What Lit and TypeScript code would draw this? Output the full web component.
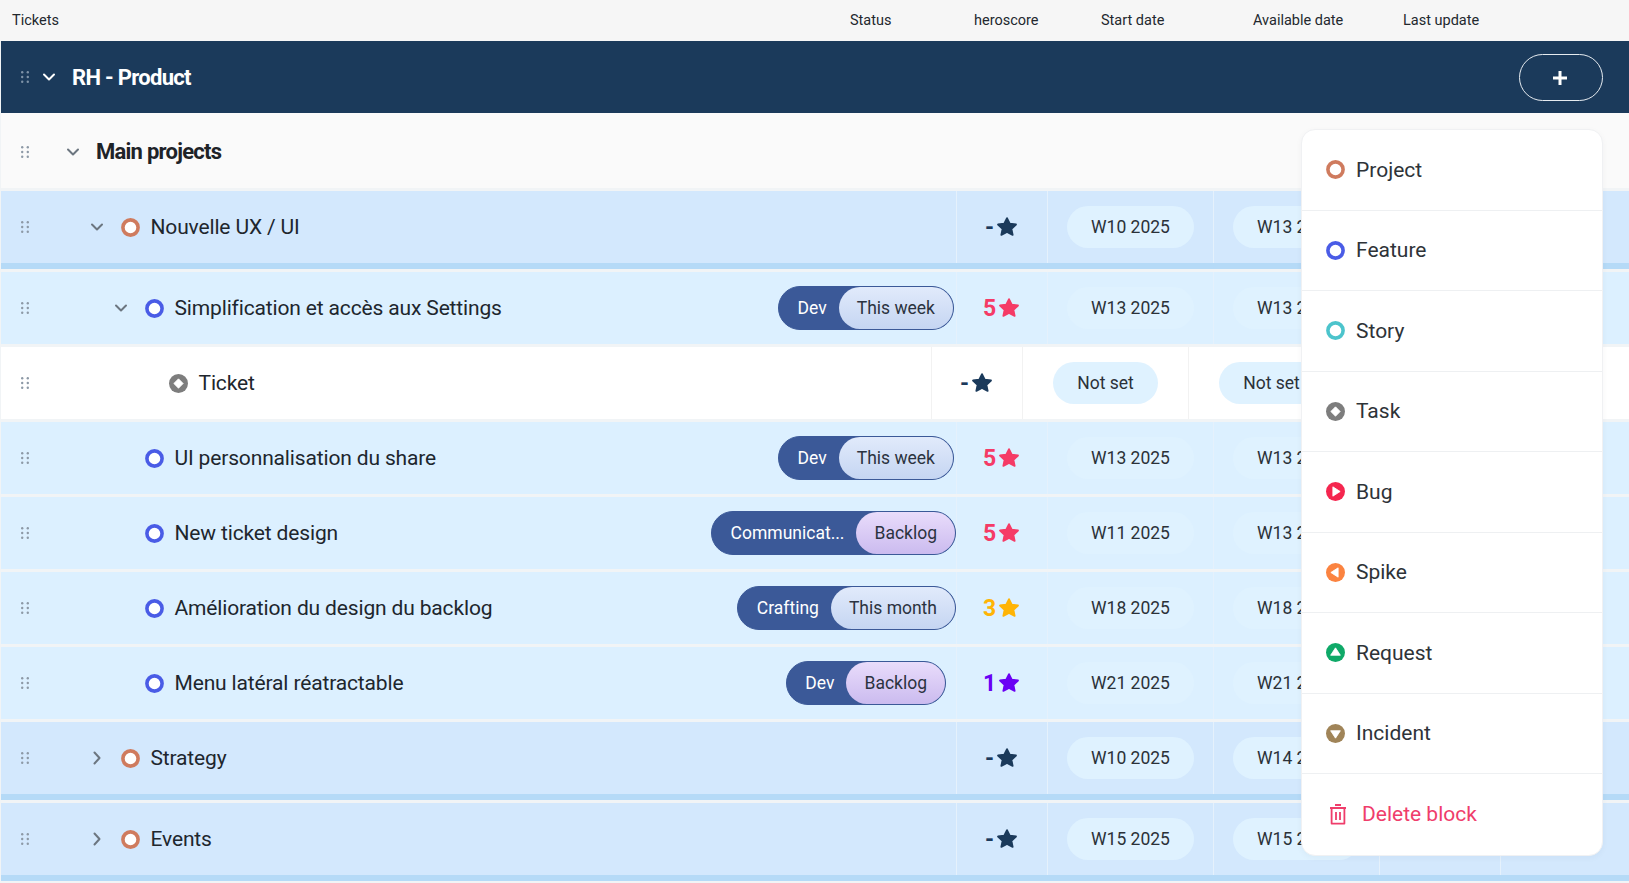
import {LitElement, css, html, svg} from "lit";
import {customElement} from "lit/decorators.js";

type Kind = "project" | "feature" | "story" | "task" | "bug" | "spike" | "request" | "incident";

interface Row {
  level: "group" | "item" | "ticket";
  depth: number;
  icon: Kind;
  name: string;
  chevron?: "down" | "right";
  left?: string;
  right?: string;
  tone?: "blue" | "violet";
  shift?: number;
  score: string;
  scoreColor: string;
  start: string;
  available: string;
}

const navy = "#1b3a5b";
const pink = "#f53b66";

const rows: Row[] = [
  {level: "group", depth: 2, icon: "project", name: "Nouvelle UX / UI", chevron: "down", score: "-", scoreColor: navy, start: "W10 2025", available: "W13 2025"},
  {level: "item", depth: 3, icon: "feature", name: "Simplification et accès aux Settings", chevron: "down", left: "Dev", right: "This week", tone: "blue", shift: 2, score: "5", scoreColor: pink, start: "W13 2025", available: "W13 2025"},
  {level: "ticket", depth: 4, icon: "task", name: "Ticket", score: "-", scoreColor: navy, start: "Not set", available: "Not set"},
  {level: "item", depth: 3, icon: "feature", name: "UI personnalisation du share", left: "Dev", right: "This week", tone: "blue", shift: 2, score: "5", scoreColor: pink, start: "W13 2025", available: "W13 2025"},
  {level: "item", depth: 3, icon: "feature", name: "New ticket design", left: "Communicat...", right: "Backlog", tone: "violet", shift: 0, score: "5", scoreColor: pink, start: "W11 2025", available: "W13 2025"},
  {level: "item", depth: 3, icon: "feature", name: "Amélioration du design du backlog", left: "Crafting", right: "This month", tone: "blue", shift: 0, score: "3", scoreColor: "#ffb405", start: "W18 2025", available: "W18 2025"},
  {level: "item", depth: 3, icon: "feature", name: "Menu latéral réatractable", left: "Dev", right: "Backlog", tone: "violet", shift: 10, score: "1", scoreColor: "#6a00f4", start: "W21 2025", available: "W21 2025"},
  {level: "group", depth: 2, icon: "project", name: "Strategy", chevron: "right", score: "-", scoreColor: navy, start: "W10 2025", available: "W14 2025"},
  {level: "group", depth: 2, icon: "project", name: "Events", chevron: "right", score: "-", scoreColor: navy, start: "W15 2025", available: "W15 2025"},
];

const menu: {icon: Kind; label: string}[] = [
  {icon: "project", label: "Project"},
  {icon: "feature", label: "Feature"},
  {icon: "story", label: "Story"},
  {icon: "task", label: "Task"},
  {icon: "bug", label: "Bug"},
  {icon: "spike", label: "Spike"},
  {icon: "request", label: "Request"},
  {icon: "incident", label: "Incident"},
];

const ringColors: Partial<Record<Kind, string>> = {project: "#cf7b5e", feature: "#4a5ce6", story: "#4cc4cc"};

function typeIcon(kind: Kind) {
  const ring = ringColors[kind];
  if (ring) {
    return html`<svg class="type" viewBox="0 0 18 18"><circle cx="9" cy="9" r="7.2" fill="#fff" stroke=${ring} stroke-width="3.4"/></svg>`;
  }
  const solid: Record<string, [string, string]> = {
    task: ["#7d7d7d", "M9 4.6 13.4 9 9 13.4 4.6 9Z"],
    bug: ["#f5264f", "M6.5 4.6 13.4 9 6.5 13.4Z"],
    spike: ["#fb8340", "M11.5 4.6 4.6 9 11.5 13.4Z"],
    request: ["#0fa968", "M9 4.6 13.6 11.6H4.4Z"],
    incident: ["#a08458", "M4.4 6.4H13.6L9 13.4Z"],
  };
  const [fill, d] = solid[kind];
  return html`<svg class="type" viewBox="0 0 18 18"><circle cx="9" cy="9" r="9" fill=${fill}/><path d=${d} fill="#fff" stroke="#fff" stroke-width=".8" stroke-linejoin="round"/></svg>`;
}

function dragDots() {
  const dots = [1.2, 6.8].flatMap((x) => [1.2, 6, 10.8].map((y) => svg`<circle cx=${x} cy=${y} r="1.2"/>`));
  return html`<svg class="drag" viewBox="0 0 8 12">${dots}</svg>`;
}

function chevron(dir?: "down" | "right") {
  if (!dir) return html`<span class="chev"></span>`;
  const d = dir === "down" ? "M3 5.5 8 10.5 13 5.5" : "M5.5 2.5 10.5 8 5.5 13.5";
  return html`<svg class="chev" viewBox="0 0 16 16"><path d=${d} fill="none" stroke="currentColor" stroke-width="2" stroke-linecap="round" stroke-linejoin="round"/></svg>`;
}

function star(color: string) {
  return html`<svg class="star" viewBox="1 1 18 17"><path d="M10 1.9 12.5 6.9 18.1 7.7 14 11.6 15.1 17 10 14.4 4.9 17 6 11.6 1.9 7.7 7.5 6.9Z" fill=${color} stroke=${color} stroke-width="1.6" stroke-linejoin="round"/></svg>`;
}

@customElement("app-root")
export class AppRoot extends LitElement {
  static styles = css`
    :host {
      display: block;
      position: relative;
      height: 100vh;
      overflow: hidden;
      background: #f1f4f6;
      font-family: Roboto, "Liberation Sans", sans-serif;
      color: #20262d;
    }
    .head {
      display: grid;
      grid-template-columns: 838px 124px 127px 152px 150px 1fr;
      align-items: center;
      height: 40px;
      padding: 0 0 1px 12px;
      background: #f6f6f6;
      font-size: 14.5px;
      color: #23282e;
    }
    .bar {
      display: flex;
      align-items: center;
      height: 72px;
      margin-left: 1px;
      padding-right: 26px;
      background: #1b3a5b;
      color: #fff;
    }
    .bar .drag { fill: #7f93a8; }
    .bar .title { flex: 1; font-size: 22px; font-weight: 700; letter-spacing: -0.7px; }
    .add {
      display: flex;
      align-items: center;
      justify-content: center;
      width: 84px;
      height: 47px;
      box-sizing: border-box;
      padding: 2px 3px 0 0;
      border: 1.5px solid #e6ebf0;
      border-radius: 24px;
    }
    .add svg { width: 16px; height: 16px; }
    .main {
      display: flex;
      align-items: center;
      box-sizing: border-box;
      height: 75px;
      margin-left: 1px;
      padding-top: 2px;
      background: #fafafa;
    }
    .main .title { font-size: 22px; font-weight: 700; letter-spacing: -0.75px; color: #1e2328; }
    .list {
      display: flex;
      flex-direction: column;
      gap: 3px;
      margin-top: 3px;
      margin-left: 1px;
    }
    .row {
      display: flex;
      height: 72px;
      flex: none;
      background: #dcf0ff;
    }
    .row.group {
      background: #d3e8fd;
      border-bottom: 6px solid #b5daf7;
    }
    .row.ticket { background: #fff; }
    .name {
      flex: 1;
      display: flex;
      align-items: center;
      min-width: 0;
      font-size: 21px;
      letter-spacing: -0.15px;
    }
    .drag {
      flex: none;
      width: 8px;
      height: 12px;
      margin-left: 20px;
      margin-right: 12px;
      fill: #8d99a6;
    }
    .chev {
      flex: none;
      width: 16px;
      height: 16px;
      margin-right: 15px;
      color: #6c7680;
    }
    .bar .chev { color: #fff; }
    .type {
      flex: none;
      width: 19px;
      height: 19px;
      margin-left: 1px;
      margin-right: 10.5px;
    }
    .label { flex: 1; white-space: nowrap; }
    .status {
      display: flex;
      align-items: center;
      height: 44px;
      box-sizing: border-box;
      border: 1px solid #3b5998;
      border-radius: 22px;
      background: #3b5998;
      font-size: 17.5px;
      letter-spacing: 0;
      white-space: nowrap;
    }
    .status .dept { padding: 0 12px 1px 18.5px; color: #fff; }
    .status .when {
      display: flex;
      align-items: center;
      box-sizing: border-box;
      height: 100%;
      padding: 0 18px 1px;
      border-radius: 21px;
      color: #2b3340;
    }
    .when.blue { background: linear-gradient(#e1eafb, #c5d5f2); }
    .when.violet { background: linear-gradient(#e9dcfb, #cbbbef); }
    .cell {
      flex: none;
      display: flex;
      align-items: center;
      justify-content: center;
      box-sizing: border-box;
      border-left: 1px solid #e5f1fc;
    }
    .ticket .cell { border-left-color: #f2f2f2; }
    .hero { width: 91px; gap: 3px; padding-right: 2px; font-size: 23px; font-weight: 700; }
    .date { width: 166px; }
    .upd { width: 121px; }
    .tail { width: 129px; }
    .ticket .tail { width: 154px; }
    .star { width: 20px; height: 19px; margin-bottom: 2px; }
    .pill {
      display: flex;
      align-items: center;
      box-sizing: border-box;
      height: 42px;
      padding: 0 24px 1px;
      border-radius: 21px;
      font-size: 17.5px;
      color: #2b3138;
      background: #dff2ff;
      white-space: nowrap;
    }
    .menu {
      position: absolute;
      left: 1301px;
      top: 129px;
      width: 302px;
      box-sizing: border-box;
      background: #fff;
      border: 1px solid #f0f1f3;
      border-radius: 14px;
      box-shadow: 0 2px 6px rgba(30, 50, 70, 0.04);
    }
    .opt {
      display: flex;
      align-items: center;
      height: 80.5px;
      box-sizing: border-box;
      padding-left: 23px;
      font-size: 21px;
      color: #2e3338;
      border-bottom: 1px solid #eef0f2;
    }
    .opt .type { margin-right: 11px; }
    .opt.del { color: #ef3d6b; border-bottom: 0; }
    .opt.del svg { width: 18px; height: 21px; margin: 0 15px 0 4px; }
  `;

  renderRow(r: Row) {
    return html`
      <div class="row ${r.level}">
        <div class="name">
          ${dragDots()}
          <span style="width:${r.depth * 24}px"></span>
          ${chevron(r.chevron)}
          ${typeIcon(r.icon)}
          <span class="label">${r.name}</span>
          ${r.left
            ? html`<div class="status" style="margin-right:${r.shift}px">
                <span class="dept">${r.left}</span>
                <span class="when ${r.tone}">${r.right}</span>
              </div>`
            : ""}
        </div>
        <div class="cell hero" style="color:${r.scoreColor}">${r.score}${star(r.scoreColor)}</div>
        <div class="cell date"><span class="pill">${r.start}</span></div>
        <div class="cell date"><span class="pill">${r.available}</span></div>
        <div class="cell upd"></div>
        <div class="cell tail"></div>
      </div>
    `;
  }

  render() {
    return html`
      <div class="head">
        <span>Tickets</span><span>Status</span><span>heroscore</span><span>Start date</span><span>Available date</span><span>Last update</span>
      </div>
      <div class="bar">
        ${dragDots()}
        ${chevron("down")}
        <span class="title">RH - Product</span>
        <div class="add">
          <svg viewBox="0 0 16 16"><path d="M8 1V15M1 8H15" stroke="#fff" stroke-width="3"/></svg>
        </div>
      </div>
      <div class="main">
        ${dragDots()}
        <span style="width:24px"></span>
        ${chevron("down")}
        <span class="title">Main projects</span>
      </div>
      <div class="list">${rows.map((r) => this.renderRow(r))}</div>
      <div class="menu">
        ${menu.map((m) => html`<div class="opt">${typeIcon(m.icon)}<span>${m.label}</span></div>`)}
        <div class="opt del">
          <svg viewBox="0 0 18 21" fill="none" stroke="currentColor" stroke-width="1.8" stroke-linejoin="round">
            <path d="M6 1H12M1 4H17M2.6 4V19.6H15.4V4M7 8V16M11 8V16"/>
          </svg>
          <span>Delete block</span>
        </div>
      </div>
    `;
  }
}
